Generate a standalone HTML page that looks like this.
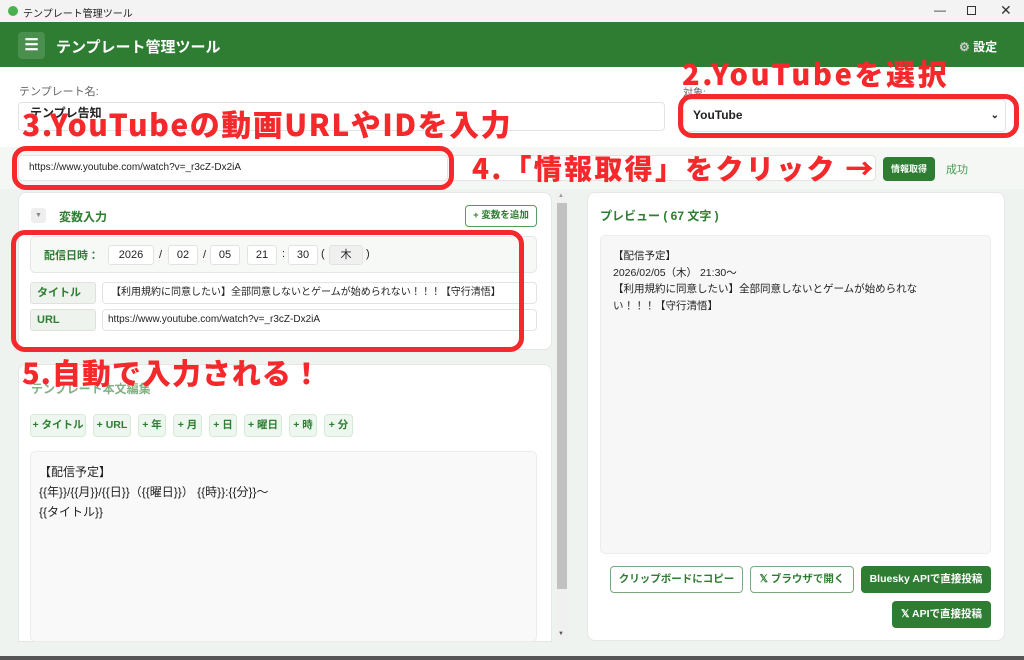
<!DOCTYPE html>
<html><head><meta charset="utf-8"><style>
*{box-sizing:border-box;margin:0;padding:0}
body{width:1024px;height:660px;overflow:hidden;position:relative;background:#eef3ef;font-family:"Liberation Sans","Noto Sans CJK JP",sans-serif;color:#222}
.a{position:absolute;white-space:nowrap}
.inp{position:absolute;background:#fff;border:1px solid #e3e3e3;border-radius:4px;white-space:nowrap;overflow:hidden}
.g{color:#2e7d32;font-weight:bold}
.red{position:absolute;color:#f5282b;font-weight:900;font-family:"Noto Sans CJK JP",sans-serif;white-space:nowrap;letter-spacing:2px}
.ring{position:absolute;border:5px solid #f5282b;border-radius:14px}
.chip{position:absolute;top:414px;height:23px;background:#eef7ef;border:1px solid #d6ead8;border-radius:4px;color:#2e7d32;font-weight:bold;font-size:10.5px;line-height:21px;text-align:center;white-space:nowrap}
.db{position:absolute;top:245px;height:20px;background:#fff;border:1px solid #e3e3e3;border-radius:3px;font-size:11px;line-height:18px;text-align:center}
.btn{position:absolute;height:27px;border-radius:4px;font-size:10.5px;font-weight:bold;line-height:25px;text-align:center;white-space:nowrap}
</style></head><body>
<div class="a" style="left:0;top:0;width:1024px;height:22px;background:#f3f3f3"></div>
<div class="a" style="left:8px;top:6px;width:10px;height:10px;border-radius:50%;background:#4caf50"></div>
<div class="a" style="left:23px;top:5px;font-size:10px">テンプレート管理ツール</div>
<div class="a" style="left:934px;top:3px;font-size:12px;color:#333">—</div>
<div class="a" style="left:967px;top:6px;width:9px;height:9px;border:1px solid #333"></div>
<div class="a" style="left:1000px;top:2px;font-size:14px;color:#333">✕</div>
<div class="a" style="left:0;top:22px;width:1024px;height:45px;background:#2e7d32"></div>
<div class="a" style="left:18px;top:32px;width:27px;height:27px;border-radius:4px;background:#4a8f4d;color:#fff;font-size:16px;line-height:27px;text-align:center;font-weight:bold">☰</div>
<div class="a" style="left:56px;top:36px;color:#fff;font-size:15px;font-weight:bold">テンプレート管理ツール</div>
<div class="a" style="left:959px;top:38px;color:#fff;font-size:12px;font-weight:bold"><span style="color:#ccc">⚙</span> 設定</div>
<div class="a" style="left:0;top:67px;width:1024px;height:80px;background:#fff"></div>
<div class="a" style="left:19px;top:83px;font-size:11px;color:#666">テンプレート名:</div>
<div class="inp" style="left:18px;top:102px;width:647px;height:29px"></div>
<div class="a" style="left:683px;top:84px;font-size:10px;color:#666">対象:</div>
<div class="inp" style="left:683px;top:99px;width:323px;height:33px;font-size:12px;font-weight:bold;line-height:31px;padding-left:9px">YouTube<span style="position:absolute;right:6px;font-size:10px">⌄</span></div>
<div class="a" style="left:0;top:147px;width:1024px;height:42px;background:#f4f7f4"></div>
<div class="inp" style="left:18px;top:155px;width:430px;height:26px;font-size:10px;line-height:24px;padding-left:10px">https://www.youtube.com/watch?v=_r3cZ-Dx2iA</div>
<div class="inp" style="left:450px;top:155px;width:426px;height:26px"></div>
<div class="btn" style="left:883px;top:157px;width:52px;height:24px;background:#2e7d32;color:#fff;font-size:9px;line-height:24px">情報取得</div>
<div class="a" style="left:946px;top:161px;font-size:11px;color:#4a9a50">成功</div>
<div class="a" style="left:18px;top:192px;width:534px;height:158px;background:#fff;border:1px solid #e6e6e6;border-radius:8px"></div>
<div class="a" style="left:31px;top:208px;width:15px;height:15px;background:#eee;border-radius:3px;font-size:7px;color:#888;text-align:center;line-height:15px">▼</div>
<div class="a g" style="left:59px;top:208px;font-size:12px">変数入力</div>
<div class="a" style="left:465px;top:205px;width:72px;height:22px;border:1px solid #5a9a5e;border-radius:4px;color:#2e7d32;font-size:9.5px;font-weight:bold;text-align:center;line-height:20px">+ 変数を追加</div>
<div class="a" style="left:30px;top:236px;width:507px;height:37px;background:#f7f9f7;border:1px solid #e6e6e6;border-radius:5px"></div>
<div class="a g" style="left:44px;top:247px;font-size:11px">配信日時：</div>
<div class="db" style="left:108px;width:46px">2026</div>
<div class="a" style="left:159px;top:249px;font-size:11px">/</div>
<div class="db" style="left:168px;width:30px">02</div>
<div class="a" style="left:203px;top:249px;font-size:11px">/</div>
<div class="db" style="left:210px;width:30px">05</div>
<div class="db" style="left:247px;width:30px">21</div>
<div class="a" style="left:282px;top:248px;font-size:11px">:</div>
<div class="db" style="left:288px;width:30px">30</div>
<div class="a" style="left:321px;top:248px;font-size:11px">(</div>
<div class="db" style="left:329px;width:34px;background:#f0f0f0">木</div>
<div class="a" style="left:366px;top:248px;font-size:11px">)</div>
<div class="a" style="left:30px;top:282px;width:66px;height:22px;background:#eef3ee;border:1px solid #e0e0e0;border-radius:3px;font-size:11px;line-height:20px;padding-left:6px" ><span class="g">タイトル</span></div>
<div class="inp" style="left:102px;top:282px;width:435px;height:22px;font-size:10px;line-height:20px;padding-left:8px">【利用規約に同意したい】全部同意しないとゲームが始められない！！！【守行清悟】</div>
<div class="a" style="left:30px;top:309px;width:66px;height:22px;background:#eef3ee;border:1px solid #e0e0e0;border-radius:3px;font-size:11px;line-height:20px;padding-left:6px;color:#2e7d32;font-weight:bold">URL</div>
<div class="inp" style="left:102px;top:309px;width:435px;height:22px;font-size:10px;line-height:20px;padding-left:5px">https://www.youtube.com/watch?v=_r3cZ-Dx2iA</div>
<div class="a" style="left:18px;top:364px;width:534px;height:278px;background:#fff;border:1px solid #e6e6e6;border-radius:8px 8px 0 0"></div>
<div class="a g" style="left:31px;top:380px;font-size:12px;opacity:.6">テンプレート本文編集</div>
<div class="chip" style="left:30px;width:56px">+ タイトル</div>
<div class="chip" style="left:93px;width:38px">+ URL</div>
<div class="chip" style="left:138px;width:28px">+ 年</div>
<div class="chip" style="left:173px;width:29px">+ 月</div>
<div class="chip" style="left:209px;width:28px">+ 日</div>
<div class="chip" style="left:244px;width:38px">+ 曜日</div>
<div class="chip" style="left:289px;width:28px">+ 時</div>
<div class="chip" style="left:324px;width:29px">+ 分</div>
<div class="a" style="left:30px;top:451px;width:507px;height:191px;background:#f9f9f9;border:1px solid #ececec;border-radius:5px"></div>
<div class="a" style="left:39px;top:462px;font-size:12px;line-height:20px">【配信予定】<br>{{年}}/{{月}}/{{日}}（{{曜日}}） {{時}}:{{分}}〜<br>{{タイトル}}</div>
<div class="a" style="left:556px;top:192px;width:12px;height:449px;background:#f0f0f0"></div>
<div class="a" style="left:557px;top:203px;width:10px;height:386px;background:#c1c1c1"></div>
<div class="a" style="left:558px;top:193px;font-size:6px;color:#999">▲</div>
<div class="a" style="left:558px;top:631px;font-size:6px;color:#555">▼</div>
<div class="a" style="left:587px;top:192px;width:418px;height:449px;background:#fff;border:1px solid #e6e6e6;border-radius:8px"></div>
<div class="a g" style="left:600px;top:207px;font-size:12px">プレビュー ( 67 文字 )</div>
<div class="a" style="left:600px;top:235px;width:391px;height:319px;background:#f7f7f7;border:1px solid #ececec;border-radius:5px"></div>
<div class="a" style="left:613px;top:248px;font-size:10.5px;line-height:16.5px">【配信予定】<br>2026/02/05（木） 21:30〜<br>【利用規約に同意したい】全部同意しないとゲームが始められな<br>い！！！【守行清悟】</div>
<div class="btn" style="left:610px;top:566px;width:133px;border:1px solid #7aa97d;color:#2e7d32;background:#fff">クリップボードにコピー</div>
<div class="btn" style="left:750px;top:566px;width:104px;border:1px solid #7aa97d;color:#2e7d32;background:#fff">𝕏 ブラウザで開く</div>
<div class="btn" style="left:861px;top:566px;width:130px;background:#2e7d32;color:#fff;line-height:27px">Bluesky APIで直接投稿</div>
<div class="btn" style="left:892px;top:601px;width:99px;background:#2e7d32;color:#fff;line-height:27px">𝕏 APIで直接投稿</div>
<div class="a" style="left:0;top:656px;width:1024px;height:4px;background:#555"></div>
<div class="a" style="left:30px;top:104px;font-size:12px;font-weight:bold">テンプレ告知</div>
<div class="red" style="left:22px;top:103px;font-size:30px;line-height:40px;letter-spacing:1.5px">3.YouTubeの動画URLやIDを入力</div>
<div class="red" style="left:682px;top:54px;font-size:29px;line-height:38px;letter-spacing:2.6px">2.YouTubeを選択</div>
<div class="red" style="left:472px;top:148px;font-size:28px;line-height:40px;letter-spacing:2.3px">4.「情報取得」をクリック →</div>
<div class="red" style="left:22px;top:352px;font-size:29px;line-height:40px;letter-spacing:1px">5.自動で入力される！</div>
<div class="ring" style="left:12px;top:146px;width:442px;height:44px"></div>
<div class="ring" style="left:678px;top:94px;width:341px;height:44px"></div>
<div class="ring" style="left:11px;top:230px;width:513px;height:122px"></div>
</body></html>
